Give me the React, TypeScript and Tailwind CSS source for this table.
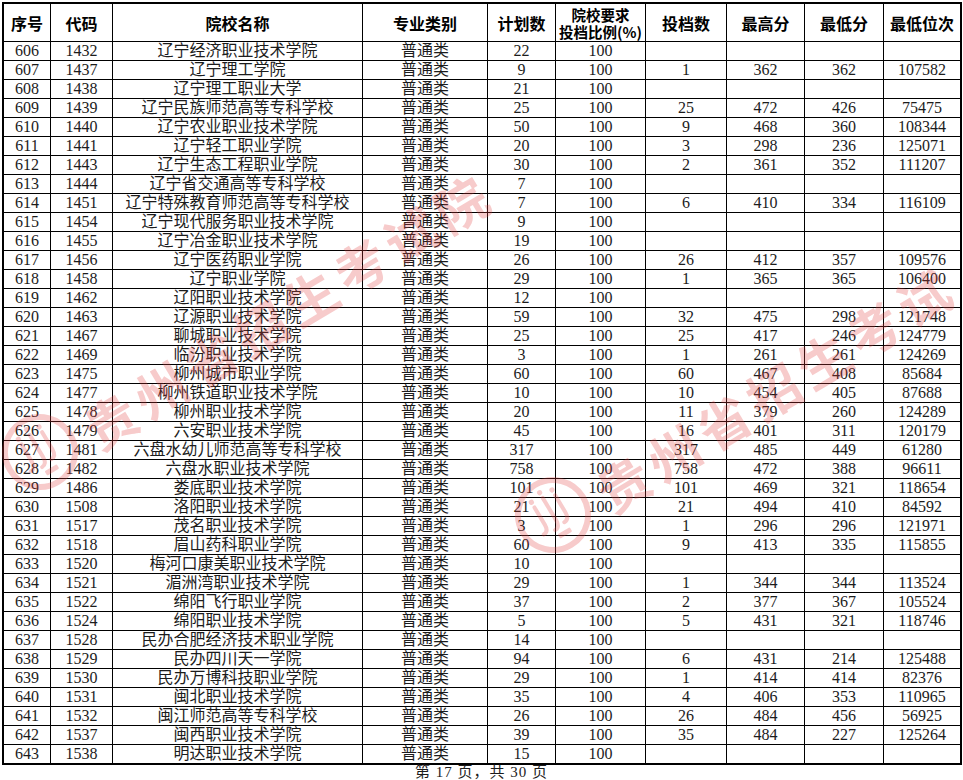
import React from "react";

type Row = [string, string, string, string, string, string, string, string, string];

const rows: Row[] = [
  ["606", "1432", "辽宁经济职业技术学院", "22", "100", "", "", "", ""],
  ["607", "1437", "辽宁理工学院", "9", "100", "1", "362", "362", "107582"],
  ["608", "1438", "辽宁理工职业大学", "21", "100", "", "", "", ""],
  ["609", "1439", "辽宁民族师范高等专科学校", "25", "100", "25", "472", "426", "75475"],
  ["610", "1440", "辽宁农业职业技术学院", "50", "100", "9", "468", "360", "108344"],
  ["611", "1441", "辽宁轻工职业学院", "20", "100", "3", "298", "236", "125071"],
  ["612", "1443", "辽宁生态工程职业学院", "30", "100", "2", "361", "352", "111207"],
  ["613", "1444", "辽宁省交通高等专科学校", "7", "100", "", "", "", ""],
  ["614", "1451", "辽宁特殊教育师范高等专科学校", "7", "100", "6", "410", "334", "116109"],
  ["615", "1454", "辽宁现代服务职业技术学院", "9", "100", "", "", "", ""],
  ["616", "1455", "辽宁冶金职业技术学院", "19", "100", "", "", "", ""],
  ["617", "1456", "辽宁医药职业学院", "26", "100", "26", "412", "357", "109576"],
  ["618", "1458", "辽宁职业学院", "29", "100", "1", "365", "365", "106400"],
  ["619", "1462", "辽阳职业技术学院", "12", "100", "", "", "", ""],
  ["620", "1463", "辽源职业技术学院", "59", "100", "32", "475", "298", "121748"],
  ["621", "1467", "聊城职业技术学院", "25", "100", "25", "417", "246", "124779"],
  ["622", "1469", "临汾职业技术学院", "3", "100", "1", "261", "261", "124269"],
  ["623", "1475", "柳州城市职业学院", "60", "100", "60", "467", "408", "85684"],
  ["624", "1477", "柳州铁道职业技术学院", "10", "100", "10", "454", "405", "87688"],
  ["625", "1478", "柳州职业技术学院", "20", "100", "11", "379", "260", "124289"],
  ["626", "1479", "六安职业技术学院", "45", "100", "16", "401", "311", "120179"],
  ["627", "1481", "六盘水幼儿师范高等专科学校", "317", "100", "317", "485", "449", "61280"],
  ["628", "1482", "六盘水职业技术学院", "758", "100", "758", "472", "388", "96611"],
  ["629", "1486", "娄底职业技术学院", "101", "100", "101", "469", "321", "118654"],
  ["630", "1508", "洛阳职业技术学院", "21", "100", "21", "494", "410", "84592"],
  ["631", "1517", "茂名职业技术学院", "3", "100", "1", "296", "296", "121971"],
  ["632", "1518", "眉山药科职业学院", "60", "100", "9", "413", "335", "115855"],
  ["633", "1520", "梅河口康美职业技术学院", "10", "100", "", "", "", ""],
  ["634", "1521", "湄洲湾职业技术学院", "29", "100", "1", "344", "344", "113524"],
  ["635", "1522", "绵阳飞行职业学院", "37", "100", "2", "377", "367", "105524"],
  ["636", "1524", "绵阳职业技术学院", "5", "100", "5", "431", "321", "118746"],
  ["637", "1528", "民办合肥经济技术职业学院", "14", "100", "", "", "", ""],
  ["638", "1529", "民办四川天一学院", "94", "100", "6", "431", "214", "125488"],
  ["639", "1530", "民办万博科技职业学院", "29", "100", "1", "414", "414", "82376"],
  ["640", "1531", "闽北职业技术学院", "35", "100", "4", "406", "353", "110965"],
  ["641", "1532", "闽江师范高等专科学校", "26", "100", "26", "484", "456", "56925"],
  ["642", "1537", "闽西职业技术学院", "39", "100", "35", "484", "227", "125264"],
  ["643", "1538", "明达职业技术学院", "15", "100", "", "", "", ""],
];

const GRID = "grid grid-cols-[47px_62px_250px_125px_68px_90px_81px_78px_79px_76px]";
const WM_TEXT = "贵州省招生考试院";
const WM_COLOR = "rgba(226,64,64,0.27)";

function Seal({ cx, cy }: { cx: number; cy: number }) {
  return (
    <svg
      className="absolute pointer-events-none"
      width="84"
      height="84"
      viewBox="0 0 84 84"
      style={{ left: cx - 42, top: cy - 42, transform: "rotate(-31deg)" }}
    >
      <circle cx="42" cy="42" r="35" fill="none" stroke={WM_COLOR} strokeWidth="6" />
      <g fill="none" stroke={WM_COLOR} strokeWidth="4" strokeLinecap="round">
        <path d="M30 26 L30 46 Q30 54 24 54" />
        <path d="M42 22 L42 48 Q42 56 36 56" />
        <path d="M54 26 L54 46 Q54 54 48 54" />
      </g>
      <g fill={WM_COLOR}>
        <circle cx="30" cy="20" r="2.6" />
        <circle cx="42" cy="16" r="2.6" />
        <circle cx="54" cy="20" r="2.6" />
        <rect x="36" y="61" width="14" height="5" rx="1" />
      </g>
    </svg>
  );
}

function Watermark({ sx, sy, count }: { sx: number; sy: number; count: number }) {
  const chars = Array.from(WM_TEXT).slice(0, count);
  return (
    <>
      <Seal cx={sx - 70} cy={sy + 32} />
      {chars.map((c, i) => (
        <span
          key={i}
          className="absolute pointer-events-none font-bold text-[52px] leading-[52px] w-[56px] h-[56px] flex items-center justify-center"
          style={{
            left: sx + i * 50 - 28,
            top: sy - i * 31 - 28,
            transform: "rotate(-31deg)",
            color: WM_COLOR,
            fontFamily: '"Noto Sans CJK SC", sans-serif',
          }}
        >
          {c}
        </span>
      ))}
    </>
  );
}

export default function App() {
  const head = [
    "序号",
    "代码",
    "院校名称",
    "专业类别",
    "计划数",
    "院校要求\n投档比例(%)",
    "投档数",
    "最高分",
    "最低分",
    "最低位次",
  ];
  return (
    <div
      className="relative w-[963px] h-[780px] bg-white overflow-hidden text-[#1c1c1c]"
      style={{ fontFamily: '"Liberation Serif", "Noto Sans CJK SC", serif' }}
    >
      <div className="ml-[2px] mt-[2px] w-[960px] border-2 border-black">
        <div className={GRID}>
          {head.map((h, i) => (
            <div
              key={i}
              className={`h-[38px] border-b border-black flex items-center justify-center text-center font-bold text-black whitespace-pre-line ${
                i < 9 ? "border-r" : ""
              } ${h.includes("\n") ? "text-[14.5px] leading-[17px]" : "text-[16px] leading-[18px]"}`}
              style={{ fontFamily: '"Noto Sans CJK SC", sans-serif' }}
            >
              {h}
            </div>
          ))}
        </div>
        {rows.map((r, ri) => {
          const cells = [r[0], r[1], r[2], "普通类", r[3], r[4], r[5], r[6], r[7], r[8]];
          const last = ri === rows.length - 1;
          return (
            <div key={ri} className={GRID}>
              {cells.map((c, ci) => (
                <div
                  key={ci}
                  className={`${last ? "h-[18px]" : "h-[19px] border-b"} border-black ${
                    ci < 9 ? "border-r" : ""
                  } flex items-center justify-center text-[16px] leading-[18px] whitespace-nowrap`}
                >
                  {c}
                </div>
              ))}
            </div>
          );
        })}
      </div>
      <div className="h-[15px] flex items-center justify-center text-[15px] leading-[15px] tracking-[1px] text-[#1c1c1c]">
        第 17 页，共 30 页
      </div>
      <Watermark sx={110} sy={420} count={8} />
      <Watermark sx={623} sy={483} count={7} />
    </div>
  );
}
